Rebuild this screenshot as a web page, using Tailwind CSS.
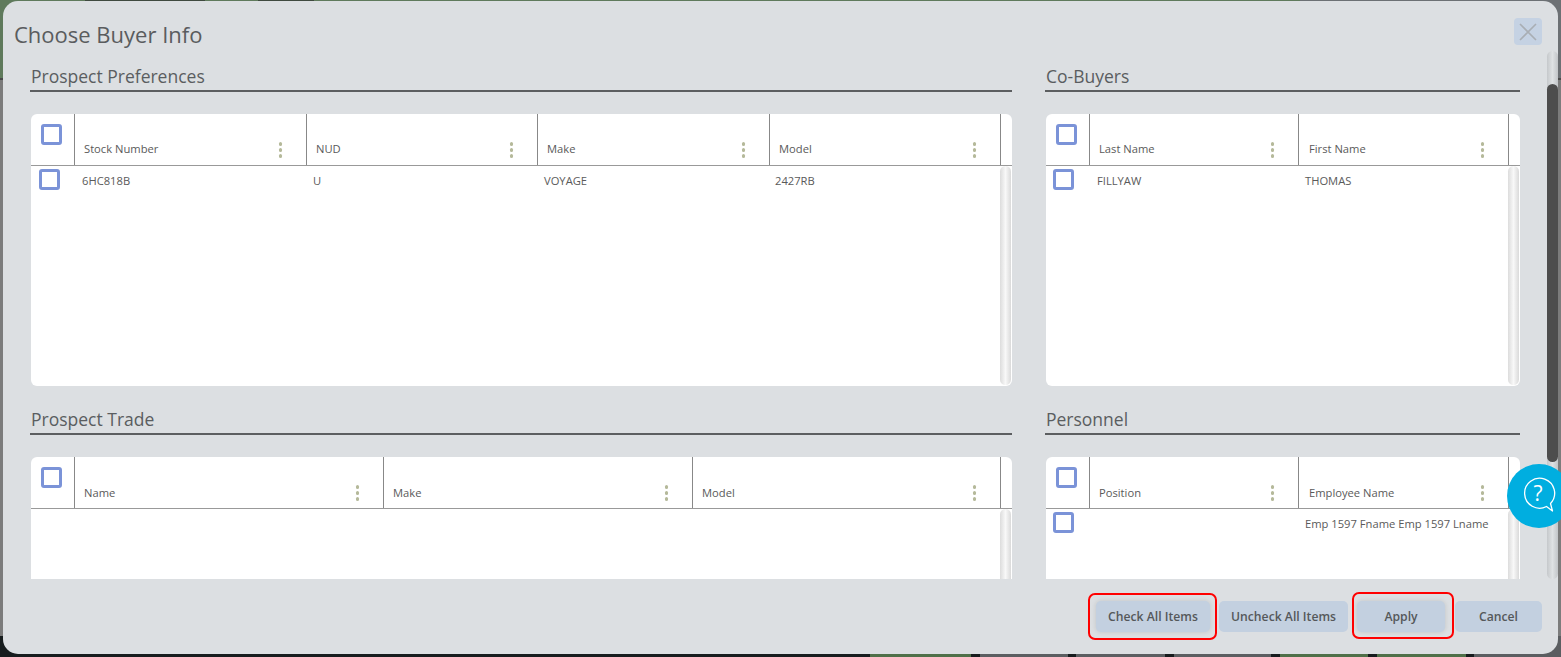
<!DOCTYPE html>
<html><head><meta charset="utf-8"><script src="https://cdn.jsdelivr.net/npm/@tailwindcss/browser@4"></script></head>
<body class="bg-[#171c1e] overflow-hidden font-['Open_Sans',sans-serif]">
<div class="relative w-[1561px] h-[657px] overflow-hidden">
  <!-- backdrop behind the dialog -->
  <div class="absolute left-0 top-0 w-[1300px] h-[78px] bg-[#5f7a5c]"></div>
  <div class="absolute left-[1300px] top-0 w-[261px] h-[78px] bg-[#6c7074]"></div>
  <div class="absolute left-[85px] top-0 w-[120px] h-px bg-[#3f4a3f]"></div>
  <div class="absolute left-[258px] top-0 w-[56px] h-px bg-[#3f4a3f]"></div>
  <div class="absolute left-0 top-[78px] w-[1561px] h-[2px] bg-[#4a4a4a]"></div>
  <div class="absolute left-0 top-[80px] w-[1561px] h-[556px] bg-[#7c7c7c]"></div>
  <div class="absolute right-0 top-[636px] w-[88px] h-[21px] bg-[#5b5e61]"></div>
  <div class="absolute left-0 bottom-0 w-[1561px] h-[5px] flex bg-[#171c1e]">
    <div class="ml-[870px] w-[101px] bg-[#4f7049]"></div>
    <div class="ml-[9px] w-[88px] bg-[#5b5e61]"></div>
    <div class="ml-[8px] w-[89px] bg-[#5b5e61]"></div>
    <div class="ml-[9px] w-[97px] bg-[#5b5e61]"></div>
    <div class="ml-[9px] w-[88px] bg-[#4f7049]"></div>
    <div class="ml-[9px] w-[89px] bg-[#4f7049]"></div>
    <div class="ml-[8px] w-[87px] bg-[#5b5e61]"></div>
  </div>

  <!-- dialog -->
  <div class="absolute left-[3px] top-[1px] w-[1555px] h-[653px] rounded-[15px] bg-[#dcdfe2] flex flex-col overflow-hidden">
    <div class="h-[50px] shrink-0 flex items-start justify-between pl-[11px] pr-[16px]">
      <h1 class="mt-[18px] text-[22px] leading-[30px] text-[#5a5c5e]">Choose Buyer Info</h1>
      <button class="mt-[17px] w-[28px] h-[27px] rounded-[4px] bg-[#c5d2e3] flex items-center justify-center">
        <svg width="18" height="18" viewBox="0 0 18 18" fill="none" stroke="#a9aeb4" stroke-width="1.6"><path d="M1 1 L17 17 M17 1 L1 17"/></svg>
      </button>
    </div>
    <div class="h-[528px] shrink-0 flex overflow-hidden">
      <div class="w-[1544px] shrink-0 pl-[27px] grid grid-cols-[982px_475px] gap-x-[33px] content-start">
        <!-- Prospect Preferences -->
        <section>
          <div class="h-[41px] border-b-2 border-[#5c5e60] text-[17.5px] leading-[25px] pl-px pt-[13px] text-[#5a5d60] box-border">Prospect Preferences</div>
          <div class="mt-[22px] ml-px h-[272px] bg-white rounded-[6px] overflow-hidden flex flex-col">
            <div class="h-[52px] shrink-0 border-b border-[#999] grid grid-cols-[44px_232px_231px_232px_231px_1fr] box-border">
              <div class="border-r border-[#888] pl-[10px] pt-[10px]"><div class="w-[21px] h-[21px] rounded-[3px] border-[3px] border-[#7b93d8] bg-white"></div></div>
              <div class="border-r border-[#888] relative pl-[9px] pt-[27px] text-[11.2px] leading-[16px] text-[#5a5a5a]">Stock Number<span class="absolute right-[24px] top-[28px] flex flex-col gap-[2.5px]"><i class="block w-[3.5px] h-[3.5px] rounded-full bg-[#b5b99a]"></i><i class="block w-[3.5px] h-[3.5px] rounded-full bg-[#b5b99a]"></i><i class="block w-[3.5px] h-[3.5px] rounded-full bg-[#b5b99a]"></i></span></div>
              <div class="border-r border-[#888] relative pl-[9px] pt-[27px] text-[11.2px] leading-[16px] text-[#5a5a5a]">NUD<span class="absolute right-[24px] top-[28px] flex flex-col gap-[2.5px]"><i class="block w-[3.5px] h-[3.5px] rounded-full bg-[#b5b99a]"></i><i class="block w-[3.5px] h-[3.5px] rounded-full bg-[#b5b99a]"></i><i class="block w-[3.5px] h-[3.5px] rounded-full bg-[#b5b99a]"></i></span></div>
              <div class="border-r border-[#888] relative pl-[9px] pt-[27px] text-[11.2px] leading-[16px] text-[#5a5a5a]">Make<span class="absolute right-[24px] top-[28px] flex flex-col gap-[2.5px]"><i class="block w-[3.5px] h-[3.5px] rounded-full bg-[#b5b99a]"></i><i class="block w-[3.5px] h-[3.5px] rounded-full bg-[#b5b99a]"></i><i class="block w-[3.5px] h-[3.5px] rounded-full bg-[#b5b99a]"></i></span></div>
              <div class="border-r border-[#888] relative pl-[9px] pt-[27px] text-[11.2px] leading-[16px] text-[#5a5a5a]">Model<span class="absolute right-[24px] top-[28px] flex flex-col gap-[2.5px]"><i class="block w-[3.5px] h-[3.5px] rounded-full bg-[#b5b99a]"></i><i class="block w-[3.5px] h-[3.5px] rounded-full bg-[#b5b99a]"></i><i class="block w-[3.5px] h-[3.5px] rounded-full bg-[#b5b99a]"></i></span></div>
              <div></div>
            </div>
            <div class="flex-1 flex min-h-0">
              <div class="flex-1 h-[33px] grid grid-cols-[44px_231px_231px_231px_1fr] text-[11.2px] leading-[16px] text-[#5a5a5a]">
                <div class="pl-[8px] pt-[3px]"><div class="w-[21px] h-[21px] rounded-[3px] border-[3px] border-[#7b93d8] bg-white"></div></div>
                <div class="pl-[7px] pt-[7px]">6HC818B</div><div class="pl-[7px] pt-[7px]">U</div><div class="pl-[7px] pt-[7px]">VOYAGE</div><div class="pl-[7px] pt-[7px]">2427RB</div>
              </div>
              <div class="w-[11px] mr-px mb-px rounded-full bg-gradient-to-r from-[#dcdcdc] via-[#f8f8f8] to-[#dadada]"></div>
            </div>
          </div>
        </section>
        <!-- Co-Buyers -->
        <section>
          <div class="h-[41px] border-b-2 border-[#5c5e60] text-[17.5px] leading-[25px] pl-px pt-[13px] text-[#5a5d60] box-border">Co-Buyers</div>
          <div class="mt-[22px] ml-px h-[272px] bg-white rounded-[6px] overflow-hidden flex flex-col">
            <div class="h-[52px] shrink-0 border-b border-[#999] grid grid-cols-[44px_209px_210px_1fr] box-border">
              <div class="border-r border-[#888] pl-[10px] pt-[10px]"><div class="w-[21px] h-[21px] rounded-[3px] border-[3px] border-[#7b93d8] bg-white"></div></div>
              <div class="border-r border-[#888] relative pl-[9px] pt-[27px] text-[11.2px] leading-[16px] text-[#5a5a5a]">Last Name<span class="absolute right-[24px] top-[28px] flex flex-col gap-[2.5px]"><i class="block w-[3.5px] h-[3.5px] rounded-full bg-[#b5b99a]"></i><i class="block w-[3.5px] h-[3.5px] rounded-full bg-[#b5b99a]"></i><i class="block w-[3.5px] h-[3.5px] rounded-full bg-[#b5b99a]"></i></span></div>
              <div class="border-r border-[#888] relative pl-[10px] pt-[27px] text-[11.2px] leading-[16px] text-[#5a5a5a]">First Name<span class="absolute right-[24px] top-[28px] flex flex-col gap-[2.5px]"><i class="block w-[3.5px] h-[3.5px] rounded-full bg-[#b5b99a]"></i><i class="block w-[3.5px] h-[3.5px] rounded-full bg-[#b5b99a]"></i><i class="block w-[3.5px] h-[3.5px] rounded-full bg-[#b5b99a]"></i></span></div>
              <div></div>
            </div>
            <div class="flex-1 flex min-h-0">
              <div class="flex-1 h-[33px] grid grid-cols-[44px_209px_1fr] text-[11.2px] leading-[16px] text-[#5a5a5a]">
                <div class="pl-[7px] pt-[3px]"><div class="w-[21px] h-[21px] rounded-[3px] border-[3px] border-[#7b93d8] bg-white"></div></div>
                <div class="pl-[7px] pt-[7px]">FILLYAW</div><div class="pl-[6px] pt-[7px]">THOMAS</div>
              </div>
              <div class="w-[11px] mr-px mb-px rounded-full bg-gradient-to-r from-[#dcdcdc] via-[#f8f8f8] to-[#dadada]"></div>
            </div>
          </div>
        </section>
        <!-- Prospect Trade -->
        <section>
          <div class="h-[49px] border-b-2 border-[#5c5e60] text-[17.5px] leading-[25px] pl-px pt-[21px] text-[#5a5d60] box-border">Prospect Trade</div>
          <div class="mt-[22px] ml-px h-[122px] bg-white rounded-t-[6px] overflow-hidden flex flex-col">
            <div class="h-[52px] shrink-0 border-b border-[#999] grid grid-cols-[44px_309px_309px_308px_1fr] box-border">
              <div class="border-r border-[#888] pl-[10px] pt-[10px]"><div class="w-[21px] h-[21px] rounded-[3px] border-[3px] border-[#7b93d8] bg-white"></div></div>
              <div class="border-r border-[#888] relative pl-[9px] pt-[28px] text-[11.2px] leading-[16px] text-[#5a5a5a]">Name<span class="absolute right-[24px] top-[28px] flex flex-col gap-[2.5px]"><i class="block w-[3.5px] h-[3.5px] rounded-full bg-[#b5b99a]"></i><i class="block w-[3.5px] h-[3.5px] rounded-full bg-[#b5b99a]"></i><i class="block w-[3.5px] h-[3.5px] rounded-full bg-[#b5b99a]"></i></span></div>
              <div class="border-r border-[#888] relative pl-[9px] pt-[28px] text-[11.2px] leading-[16px] text-[#5a5a5a]">Make<span class="absolute right-[24px] top-[28px] flex flex-col gap-[2.5px]"><i class="block w-[3.5px] h-[3.5px] rounded-full bg-[#b5b99a]"></i><i class="block w-[3.5px] h-[3.5px] rounded-full bg-[#b5b99a]"></i><i class="block w-[3.5px] h-[3.5px] rounded-full bg-[#b5b99a]"></i></span></div>
              <div class="border-r border-[#888] relative pl-[9px] pt-[28px] text-[11.2px] leading-[16px] text-[#5a5a5a]">Model<span class="absolute right-[24px] top-[28px] flex flex-col gap-[2.5px]"><i class="block w-[3.5px] h-[3.5px] rounded-full bg-[#b5b99a]"></i><i class="block w-[3.5px] h-[3.5px] rounded-full bg-[#b5b99a]"></i><i class="block w-[3.5px] h-[3.5px] rounded-full bg-[#b5b99a]"></i></span></div>
              <div></div>
            </div>
            <div class="flex-1 flex justify-end min-h-0">
              <div class="w-[11px] mr-px rounded-t-full bg-gradient-to-r from-[#dcdcdc] via-[#f8f8f8] to-[#dadada]"></div>
            </div>
          </div>
        </section>
        <!-- Personnel -->
        <section>
          <div class="h-[49px] border-b-2 border-[#5c5e60] text-[17.5px] leading-[25px] pl-px pt-[21px] text-[#5a5d60] box-border">Personnel</div>
          <div class="mt-[22px] ml-px h-[122px] bg-white rounded-t-[6px] overflow-hidden flex flex-col">
            <div class="h-[52px] shrink-0 border-b border-[#999] grid grid-cols-[44px_209px_210px_1fr] box-border">
              <div class="border-r border-[#888] pl-[10px] pt-[10px]"><div class="w-[21px] h-[21px] rounded-[3px] border-[3px] border-[#7b93d8] bg-white"></div></div>
              <div class="border-r border-[#888] relative pl-[9px] pt-[28px] text-[11.2px] leading-[16px] text-[#5a5a5a]">Position<span class="absolute right-[24px] top-[28px] flex flex-col gap-[2.5px]"><i class="block w-[3.5px] h-[3.5px] rounded-full bg-[#b5b99a]"></i><i class="block w-[3.5px] h-[3.5px] rounded-full bg-[#b5b99a]"></i><i class="block w-[3.5px] h-[3.5px] rounded-full bg-[#b5b99a]"></i></span></div>
              <div class="border-r border-[#888] relative pl-[10px] pt-[28px] text-[11.2px] leading-[16px] text-[#5a5a5a]">Employee Name<span class="absolute right-[24px] top-[28px] flex flex-col gap-[2.5px]"><i class="block w-[3.5px] h-[3.5px] rounded-full bg-[#b5b99a]"></i><i class="block w-[3.5px] h-[3.5px] rounded-full bg-[#b5b99a]"></i><i class="block w-[3.5px] h-[3.5px] rounded-full bg-[#b5b99a]"></i></span></div>
              <div></div>
            </div>
            <div class="flex-1 flex min-h-0">
              <div class="flex-1 h-[33px] grid grid-cols-[44px_209px_1fr] text-[11.2px] leading-[16px] text-[#5a5a5a]">
                <div class="pl-[7px] pt-[3px]"><div class="w-[21px] h-[21px] rounded-[3px] border-[3px] border-[#7b93d8] bg-white"></div></div>
                <div></div><div class="pl-[6px] pt-[7px] whitespace-nowrap">Emp 1597 Fname Emp 1597 Lname</div>
              </div>
              <div class="w-[11px] mr-px rounded-t-full bg-gradient-to-r from-[#dcdcdc] via-[#f8f8f8] to-[#dadada]"></div>
            </div>
          </div>
        </section>
      </div>
      <!-- outer scrollbar -->
      <div class="w-[11px] shrink-0 rounded-full bg-gradient-to-r from-[#c5c8cb] via-[#dfe2e4] to-[#c2c5c8] relative">
        <div class="absolute left-0 top-[33px] w-[11px] h-[378px] rounded-full bg-[#4d4d4d]"></div>
      </div>
    </div>
    <div class="flex-1 flex justify-end pr-[16px] pt-[22px] text-[12.2px] font-semibold text-[#55585a]">
      <button class="pt-px w-[114px] h-[31px] rounded-[5px] bg-[#c3d0e0] shadow-[0_0_5px_rgba(0,0,0,0.12)]">Check All Items</button>
      <button class="pt-px ml-[9px] w-[129px] h-[31px] rounded-[5px] bg-[#c3d0e0]">Uncheck All Items</button>
      <button class="pt-px ml-[9px] w-[88px] h-[31px] rounded-[5px] bg-[#c3d0e0] shadow-[0_0_5px_rgba(0,0,0,0.12)]">Apply</button>
      <button class="pt-px ml-[10px] w-[87px] h-[31px] rounded-[5px] bg-[#c3d0e0]">Cancel</button>
    </div>
  </div>

  <!-- red annotation boxes -->
  <div class="absolute left-[1088px] top-[593px] w-[129px] h-[47px] rounded-[7px] border-2 border-[#f00]"></div>
  <div class="absolute left-[1352px] top-[592px] w-[102px] h-[47px] rounded-[7px] border-2 border-[#f00]"></div>

  <!-- help bubble -->
  <div class="absolute left-[1507px] top-[464px] w-[64px] h-[64px] rounded-full bg-[#00aee0]">
    <svg class="absolute left-[14px] top-[12px]" width="36" height="38" viewBox="0 0 36 38" fill="none" stroke="#fff" stroke-width="1.3" stroke-linejoin="round"><path d="M29.5 27.500 L31.500 35 L25.500 30.500 A15 15 0 1 1 29.500 27.500 Z"/><text x="17" y="25" text-anchor="middle" font-family="Open Sans" font-size="21" fill="#fff" stroke="none">?</text></svg>
  </div>
</div>
</body></html>
